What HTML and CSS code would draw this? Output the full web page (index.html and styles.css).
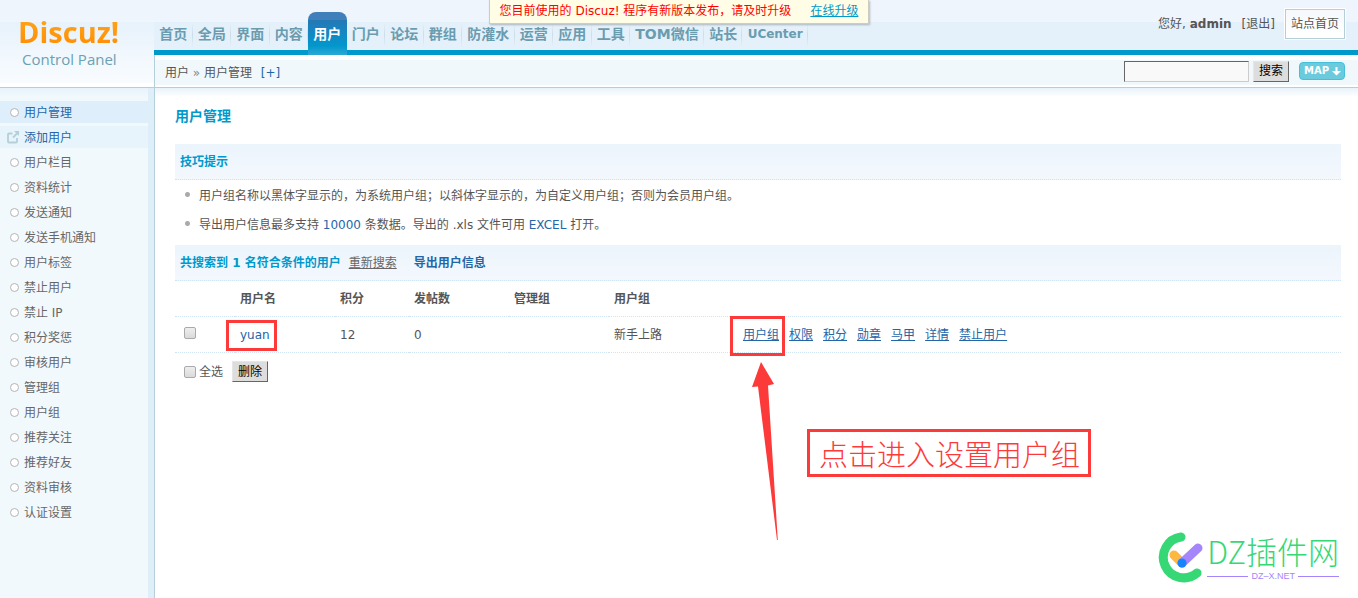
FILE: index.html
```
<!DOCTYPE html>
<html lang="zh-CN">
<head>
<meta charset="utf-8">
<title>Discuz! Control Panel</title>
<link rel="stylesheet" href="styles.css">
</head>
<body>
<div class="notice"><span>您目前使用的 Discuz! 程序有新版本发布，请及时升级</span><a href="#">在线升级</a></div>
<header class="top">
  <div class="brand">
    <div class="logo">Discuz!</div>
    <div class="logo-sub">Control Panel</div>
  </div>
  <div class="top-main">
    <div class="menu-bar">
      <nav>
        <ul class="menu">
          <li><a href="#">首页</a></li>
          <li><a href="#">全局</a></li>
          <li><a href="#">界面</a></li>
          <li><a href="#">内容</a></li>
          <li class="current"><a href="#">用户</a></li>
          <li><a href="#">门户</a></li>
          <li><a href="#">论坛</a></li>
          <li><a href="#">群组</a></li>
          <li><a href="#">防灌水</a></li>
          <li><a href="#">运营</a></li>
          <li><a href="#">应用</a></li>
          <li><a href="#">工具</a></li>
          <li><a href="#">TOM微信</a></li>
          <li><a href="#">站长</a></li>
          <li class="small"><a href="#">UCenter</a></li>
        </ul>
      </nav>
      <div class="account">
        <span>您好, <strong>admin</strong></span>
        <a class="logout" href="#">[退出]</a>
        <a class="site-home" href="#">站点首页</a>
      </div>
    </div>
    <div class="crumb-bar">
      <div class="crumbs">用户 <span class="sep">»</span> 用户管理 <a href="#">[+]</a></div>
      <form class="search">
        <input type="text" class="search-box" aria-label="搜索">
        <button type="button" class="btn">搜索</button>
        <a class="map" href="#">MAP<svg width="9" height="9" viewBox="0 0 9 9" aria-hidden="true"><path d="M3.500 0h2v4H9L4.500 8.500 0 4h3.500z"/></svg></a>
      </form>
    </div>
  </div>
</header>
<div class="body">
  <aside class="side">
    <ul class="side-list">
      <li class="on"><a href="#">用户管理</a></li>
      <li class="hover"><svg class="pop" width="12" height="13" viewBox="0 0 12 13" aria-hidden="true"><path d="M5.500 2.500H2a1 1 0 0 0-1 1v7a1 1 0 0 0 1 1h7a1 1 0 0 0 1-1V7M6 6.500 10 2.500" fill="none" stroke="#b5cfd9" stroke-width="1.800"/><path d="M7 0h5v5z" fill="#b5cfd9"/></svg><a href="#">添加用户</a></li>
      <li><a href="#">用户栏目</a></li>
      <li><a href="#">资料统计</a></li>
      <li><a href="#">发送通知</a></li>
      <li><a href="#">发送手机通知</a></li>
      <li><a href="#">用户标签</a></li>
      <li><a href="#">禁止用户</a></li>
      <li><a href="#">禁止 IP</a></li>
      <li><a href="#">积分奖惩</a></li>
      <li><a href="#">审核用户</a></li>
      <li><a href="#">管理组</a></li>
      <li><a href="#">用户组</a></li>
      <li><a href="#">推荐关注</a></li>
      <li><a href="#">推荐好友</a></li>
      <li><a href="#">资料审核</a></li>
      <li><a href="#">认证设置</a></li>
    </ul>
  </aside>
  <main class="content">
    <h1>用户管理</h1>
    <h2 class="band">技巧提示</h2>
    <ul class="tips">
      <li>用户组名称以黑体字显示的，为系统用户组；以斜体字显示的，为自定义用户组；否则为会员用户组。</li>
      <li>导出用户信息最多支持 <em>10000</em> 条数据。导出的 .xls 文件可用 <em>EXCEL</em> 打开。</li>
    </ul>
    <div class="band"><h2>共搜索到 1 名符合条件的用户</h2><a class="again" href="#">重新搜索</a><a class="export" href="#">导出用户信息</a></div>
    <table class="users">
      <colgroup><col class="c-check"><col class="c-name"><col class="c-score"><col class="c-posts"><col class="c-admin"><col class="c-group"><col></colgroup>
      <thead>
        <tr><th></th><th>用户名</th><th>积分</th><th>发帖数</th><th>管理组</th><th>用户组</th><th></th></tr>
      </thead>
      <tbody>
        <tr>
          <td class="pick"><input type="checkbox" aria-label="yuan"></td>
          <td><a class="name" href="#">yuan</a></td>
          <td>12</td><td>0</td><td></td><td>新手上路</td>
          <td><div class="acts"><a href="#">用户组</a><a href="#">权限</a><a href="#">积分</a><a href="#">勋章</a><a href="#">马甲</a><a href="#">详情</a><a href="#">禁止用户</a></div></td>
        </tr>
      </tbody>
    </table>
    <div class="foot"><label><input type="checkbox">全选</label><button type="button" class="btn">删除</button></div>
  </main>
</div>

<div class="mark mark-name"></div>
<div class="mark mark-group"></div>
<svg class="arrow" width="28" height="180" viewBox="0 0 28 180" aria-hidden="true"><path d="M11 1 24 23 18 24.500 27.800 179H27L8 25.500 2 26z" fill="#fd3a3a"/></svg>
<div class="callout">点击进入设置用户组</div>

<div class="stamp">
  <svg width="50" height="52" viewBox="0 0 50 52" aria-hidden="true">
    <path d="M26 5A20.500 20.500 0 1 0 42 41" fill="none" stroke="#36d876" stroke-width="9" stroke-linecap="round"/>
    <path d="M19 23 27 31" stroke="#fdb83f" stroke-width="9" stroke-linecap="round"/>
    <path d="M43 16 27 31" stroke="#a585fb" stroke-width="9" stroke-linecap="round"/>
    <circle cx="27" cy="31" r="4.500" fill="#1684fc"/>
  </svg>
  <div class="stamp-text">
    <div class="stamp-name">DZ插件网</div>
    <div class="stamp-url">DZ–X.NET</div>
  </div>
</div>
</body>
</html>
```
FILE: styles.css
```
* { box-sizing: border-box; }
html, body { height: 100%; }
body {
  margin: 0;
  display: flex;
  flex-direction: column;
  min-height: 100%;
  font: 12px/18px "DejaVu Sans", "Noto Sans CJK SC", sans-serif;
  color: #555;
  background: #fff;
}
ul { margin: 0; padding: 0; list-style: none; }
h1, h2 { margin: 0; color: #09c; font-weight: bold; }
a { color: #2366a8; text-decoration: none; }

.notice {
  position: absolute;
  z-index: 2;
  top: 0;
  left: 0;
  right: 0;
  width: fit-content;
  margin: 0 auto;
  display: flex;
  gap: 19px;
  padding: 2px 10px 3px;
  color: #f00;
  background: #fffde6;
  border: 1px solid #cdccc4;
  border-top: 0;
  box-shadow: 1px 1px 2px rgba(0, 0, 0, .25);
}
.notice a { color: #09c; text-decoration: underline; }

/* header */
.top {
  display: flex;
  height: 88px;
  border-bottom: 1px solid #b5cfd9;
  background: #eef5fc;
}
.brand {
  width: 154px;
  padding: 13px 0 0 18px;
  background: linear-gradient(#eef5fc 22px, #e7f2fb 22px, #f9fcff 83px, #fff 83px);
}
.logo {
  font: bold 29px/38px "Open Sans", sans-serif;
  color: transparent;
  background: linear-gradient(#ffa81f, #ff8a00);
  background-clip: text;
  -webkit-background-clip: text;
}
.logo-sub { padding-left: 4px; font: 15px/16px "Open Sans", sans-serif; color: #6ba1b4; }
.top-main { flex: 1; }
.menu-bar {
  display: flex;
  justify-content: space-between;
  height: 55px;
  border-bottom: 5px solid #09c;
  background: linear-gradient(#eef5fc 22px, #e4f0fa 22px);
}
.menu { display: flex; width: 654px; padding-top: 12px; }
.menu li {
  flex: 1 1 auto;
  text-align: center;
  font-size: 14px;
  font-weight: bold;
  background: linear-gradient(rgba(181, 207, 217, 0), #cbdde8 50%, rgba(181, 207, 217, 0)) right 11px / 1px 24px no-repeat;
}
.menu a { display: block; height: 43px; line-height: 45px; color: #6a9cb0; }
.menu .small { font-size: 12px; }
.menu .current {
  background: linear-gradient(#3f7fba 8px, #2578b6 8px, #0297cd 34px, #2ba8d5);
  border-radius: 8px 8px 0 0;
}
.menu .current a { color: #fff; }
.account { display: flex; align-items: center; height: 48px; padding-right: 13px; gap: 10px; }
.account a { color: #555; }
.account .site-home {
  padding: 5px;
  border: 1px solid #b5cfd9;
  outline: 1px solid #fff;
  background: linear-gradient(#f5f9fc, #fff);
}
.crumb-bar {
  display: flex;
  justify-content: space-between;
  align-items: center;
  height: 32px;
  padding: 0 13px 0 10px;
  border-left: 1px solid #b5cfd9;
  background: linear-gradient(#fff 5px, #f0f8fb 5px, #f0f8fb 30px, #fff 30px);
}
.crumbs { padding-top: 4px; }
.crumbs .sep { color: #888; }
.crumbs a { margin-left: 5px; }
.search { display: flex; align-items: center; gap: 4px; }
.search-box {
  width: 125px;
  height: 21px;
  padding: 2px;
  border: 1px solid;
  border-color: #666 #ccc #ccc #666;
  background: #f9f9f9;
  font: inherit;
}
.btn {
  height: 21px;
  padding: 0 5px;
  border: 1px solid;
  border-color: #e6e6e6 #666 #666 #e6e6e6;
  background: #ddd;
  color: #000;
  font: inherit;
}
.map {
  display: flex;
  align-items: center;
  gap: 3px;
  height: 18px;
  margin-left: 6px;
  padding: 0 3px 0 4px;
  border: 1px solid #45c0db;
  border-radius: 4px;
  background: #6bcbdd;
  color: #fff;
  font-size: 10px;
  font-weight: bold;
}
.map svg { fill: #fff; }

/* body */
.body { display: flex; flex: 1; }
.side {
  width: 155px;
  padding: 13px 6px 0 0;
  border-right: 1px solid #b5cfd9;
  background:
    linear-gradient(#dfeffa, #dfeffa) right / 6px 100% no-repeat,
    linear-gradient(#e7f3fb, #f2f9fd 10px);
}
.side-list { display: grid; gap: 3px; }
.side li {
  position: relative;
  height: 22px;
  padding-left: 24px;
  line-height: 24px;
}
.side a { color: #666; }
.side li::before {
  content: "";
  position: absolute;
  left: 10px;
  top: 7px;
  width: 7px;
  height: 7px;
  border: 1px solid #b4b4b4;
  border-radius: 50%;
  background: #fff;
}
.side .on { background: #deeefa; }
.side .hover { background: #e8f4fb; }
.side .hover::before { display: none; }
.side .on a, .side .hover a { color: #2366a8; }
.pop { position: absolute; left: 7px; top: 5px; }

.content {
  flex: 1;
  min-width: 0;
  padding: 18px 17px 0 20px;
  background: linear-gradient(#e8f3fb, #fff 9px);
}
h1 { font-size: 14px; line-height: 20px; }
h2 { font-size: 12px; }
.band {
  display: flex;
  align-items: center;
  height: 36px;
  padding: 1px 0 0 5px;
  border-bottom: 1px dotted #cfe3f2;
  background: linear-gradient(#ecf4fc, #f3f8fd);
}
h1 + .band { margin-top: 18px; }
.again { margin-left: 8px; color: #666; text-decoration: underline; }
.export { margin-left: 17px; font-weight: bold; }
.tips { padding: 1px 0; }
.tips li {
  padding: 6px 0 5px 24px;
  background: radial-gradient(circle, #aaa 2px, rgba(170, 170, 170, 0) 3px) 9px 10px / 7px 7px no-repeat;
}
.tips li + li { padding-bottom: 10px; }
.tips em { font-style: normal; color: #2366a8; }
.users { width: 100%; table-layout: fixed; border-collapse: separate; border-spacing: 0; }
.users th, .users td {
  height: 36px;
  padding: 0 0 0 5px;
  text-align: left;
  border-bottom: 1px dotted #cfe3f2;
}
.users .pick { padding: 0 0 3px 9px; }
.c-check { width: 60px; }
.c-name { width: 100px; }
.c-score { width: 74px; }
.c-posts { width: 100px; }
.c-admin { width: 100px; }
.c-group { width: 129px; }
.acts { display: flex; gap: 10px; }
.acts a { text-decoration: underline; }
input[type="checkbox"] {
  appearance: none;
  display: block;
  width: 12px;
  height: 12px;
  margin: 0;
  border: 1px solid #aaa;
  border-radius: 2px;
  background: linear-gradient(#eee, #dadada);
}
.foot { display: flex; align-items: center; gap: 9px; height: 37px; padding-left: 9px; }
.foot label { display: flex; align-items: center; gap: 3px; }

/* annotations laid over the page */
.mark { position: absolute; border: 3px solid #fd3a3a; }
.mark-name { left: 226px; top: 320px; width: 51px; height: 31px; }
.mark-group { left: 730px; top: 316px; width: 55px; height: 40px; }
.arrow { position: absolute; left: 750px; top: 361px; }
.callout {
  position: absolute;
  left: 807px;
  top: 429px;
  padding: 0 8px 0 9px;
  border: 3px solid #fd3a3a;
  color: #fd3a3a;
  font: 300 29px/42px "Noto Sans CJK SC", sans-serif;
}
.stamp { position: absolute; right: 19px; bottom: 14px; display: flex; gap: 2px; }
.stamp-name { font: 300 31px/38px "Noto Sans CJK SC", sans-serif; color: #36d876; }
.stamp-url {
  display: flex;
  align-items: center;
  gap: 3px;
  font: 9px/12px "Liberation Sans", sans-serif;
  color: #a585fb;
}
.stamp-url::before, .stamp-url::after { content: ""; flex: 1; height: 1px; background: #a585fb; }
```
